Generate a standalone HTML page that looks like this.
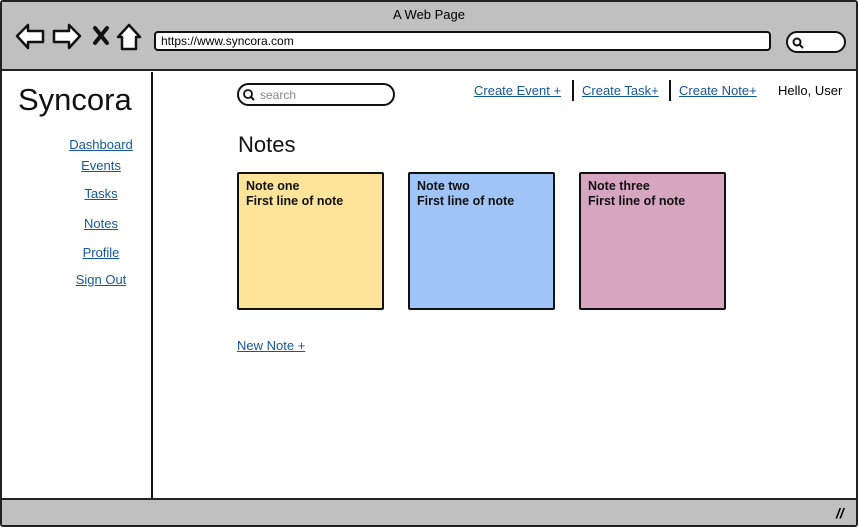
<!DOCTYPE html>
<html><head><style>
*{margin:0;padding:0;box-sizing:border-box}
body{width:858px;height:527px;position:relative;background:#fff;font-family:"Liberation Sans",sans-serif;overflow:hidden}
.a{position:absolute}
.lnk{position:absolute;color:#15579c;text-decoration:underline;font-size:13px;white-space:nowrap}
.card{position:absolute;top:172px;width:147px;height:138px;border:2.5px solid #111;border-radius:2px;padding:5px 7px;font-weight:bold;font-size:12.5px;line-height:15px;color:#111}
</style></head><body>
<div class="a" style="left:0;top:0;width:858px;height:527px;border:2px solid #222;border-radius:3px"></div>
<div class="a" style="left:2px;top:2px;width:854px;height:69px;background:#c0c0c0;border-bottom:2px solid #222"></div>
<div class="a" style="left:0;top:7px;width:858px;text-align:center;font-size:13px">A Web Page</div>
<svg class="a" style="left:14px;top:22px" width="130" height="30" viewBox="0 0 130 30">
<g fill="#fff" stroke="#111" stroke-width="2.5" stroke-linejoin="round">
<path d="M3 14 L14 3 L14 9 L29 9 L29 20 L14 20 L14 26 Z"/>
<path d="M66 14 L55 3 L55 9 L40 9 L40 20 L55 20 L55 26 Z"/>
<path d="M104 15 L115 3 L126 15 L122 15 L122 27 L108 27 L108 15 Z"/>
</g>
<path d="M81 6 L93 21 M93 6 L81 21" stroke="#111" stroke-width="4" stroke-linecap="round"/>
</svg>
<div class="a" style="left:154px;top:31px;width:617px;height:20px;background:#fff;border:2.5px solid #111;border-radius:4px;font-size:12px;padding:2px 5px;line-height:13px">https://www.syncora.com</div>
<div class="a" style="left:786px;top:31px;width:60px;height:22px;background:#fff;border:2.5px solid #111;border-radius:11px"></div>
<svg class="a" style="left:791px;top:36px" width="14" height="14"><circle cx="6" cy="6" r="3.5" fill="none" stroke="#111" stroke-width="2"/><path d="M8.5 8.5 L12 12" stroke="#111" stroke-width="2"/></svg>
<div class="a" style="left:151px;top:72px;width:2px;height:427px;background:#111"></div>
<div class="a" style="left:2px;top:498px;width:854px;height:27px;background:#c0c0c0;border-top:2px solid #222"></div>
<div class="a" style="left:836px;top:505px;font-size:14px;font-weight:bold;font-style:italic">//</div>
<div class="a" style="left:18px;top:82px;font-size:31px;color:#111">Syncora</div>
<div class="lnk" style="left:0;width:202px;text-align:center;top:137px">Dashboard</div>
<div class="lnk" style="left:0;width:202px;text-align:center;top:158px">Events</div>
<div class="lnk" style="left:0;width:202px;text-align:center;top:186px">Tasks</div>
<div class="lnk" style="left:0;width:202px;text-align:center;top:216px">Notes</div>
<div class="lnk" style="left:0;width:202px;text-align:center;top:245px">Profile</div>
<div class="lnk" style="left:0;width:202px;text-align:center;top:272px">Sign Out</div>
<div class="a" style="left:237px;top:83px;width:158px;height:23px;border:2px solid #111;border-radius:12px;font-size:12px;color:#888;padding:3px 0 0 21px">search</div>
<svg class="a" style="left:242px;top:88px" width="14" height="14"><circle cx="6" cy="6" r="4" fill="none" stroke="#111" stroke-width="1.8"/><path d="M9 9 L12 12" stroke="#111" stroke-width="2"/></svg>
<div class="lnk" style="left:474px;top:83px">Create Event +</div>
<div class="a" style="left:572px;top:80px;width:2px;height:21px;background:#111"></div>
<div class="lnk" style="left:582px;top:83px">Create Task+</div>
<div class="a" style="left:669px;top:80px;width:2px;height:21px;background:#111"></div>
<div class="lnk" style="left:679px;top:83px">Create Note+</div>
<div class="a" style="left:778px;top:83px;font-size:13px">Hello, User</div>
<div class="a" style="left:238px;top:132px;font-size:22px;color:#111">Notes</div>
<div class="card" style="left:237px;background:#fde499">Note one<br>First line of note</div>
<div class="card" style="left:408px;background:#a0c4f6">Note two<br>First line of note</div>
<div class="card" style="left:579px;background:#d6a6c0">Note three<br>First line of note</div>
<div class="lnk" style="left:237px;top:338px">New Note +</div>
</body></html>
